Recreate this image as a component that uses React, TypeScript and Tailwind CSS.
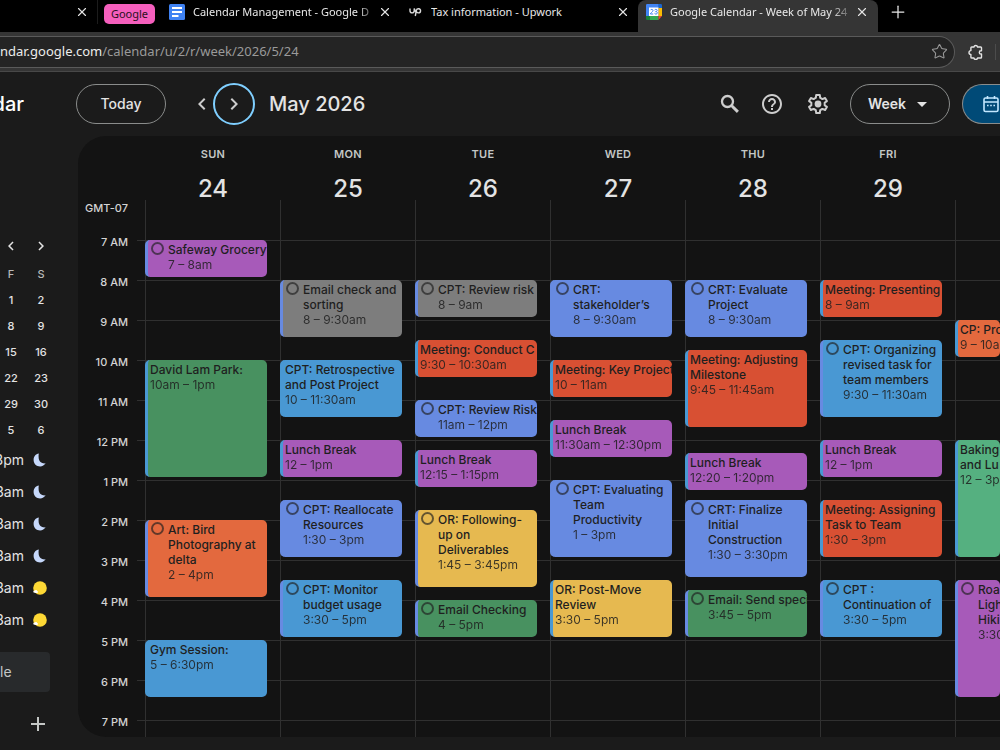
import React from 'react';
import { MdAdd, MdArrowDropDown, MdChevronLeft, MdChevronRight, MdHelpOutline } from 'react-icons/md';
import { LuPlus, LuStar, LuX } from 'react-icons/lu';

type Tone = 'purple' | 'green' | 'gray' | 'blue' | 'sky' | 'red' | 'orange' | 'yellow' | 'sage';

type CalEvent = {
  title: string;
  time: string;
  start: number;
  end: number;
  tone: Tone;
  edge: 'blue' | 'sky';
  task?: boolean;
};

const TONES: Record<Tone, string> = {
  purple: 'bg-[#a75ab9]',
  green: 'bg-[#489160]',
  gray: 'bg-[#7d7d7d]',
  blue: 'bg-[#678ae1]',
  sky: 'bg-[#4998d3]',
  red: 'bg-[#d85033]',
  orange: 'bg-[#e3693e]',
  yellow: 'bg-[#e6b950]',
  sage: 'bg-[#55b080]',
};

const EDGES = { blue: 'border-[#678ae1]', sky: 'border-[#4998d3]' };

const FIRST_MINUTE = 6 * 60;
const at = (hour: number, minute = 0) => hour * 60 + minute;

const DAYS: { name: string; date: string; events: CalEvent[] }[] = [
  {
    name: 'SUN',
    date: '24',
    events: [
      { title: 'Safeway Grocery', time: '7 – 8am', start: at(7), end: at(8), tone: 'purple', edge: 'blue', task: true },
      { title: 'David Lam Park:', time: '10am – 1pm', start: at(10), end: at(13), tone: 'green', edge: 'sky' },
      { title: 'Art: Bird\nPhotography at\ndelta', time: '2 – 4pm', start: at(14), end: at(16), tone: 'orange', edge: 'blue', task: true },
      { title: 'Gym Session:', time: '5 – 6:30pm', start: at(17), end: at(18, 30), tone: 'sky', edge: 'sky' },
    ],
  },
  {
    name: 'MON',
    date: '25',
    events: [
      { title: 'Email check and\nsorting', time: '8 – 9:30am', start: at(8), end: at(9, 30), tone: 'gray', edge: 'blue', task: true },
      { title: 'CPT: Retrospective\nand Post Project', time: '10 – 11:30am', start: at(10), end: at(11, 30), tone: 'sky', edge: 'sky' },
      { title: 'Lunch Break', time: '12 – 1pm', start: at(12), end: at(13), tone: 'purple', edge: 'sky' },
      { title: 'CPT: Reallocate\nResources', time: '1:30 – 3pm', start: at(13, 30), end: at(15), tone: 'blue', edge: 'blue', task: true },
      { title: 'CPT: Monitor\nbudget usage', time: '3:30 – 5pm', start: at(15, 30), end: at(17), tone: 'sky', edge: 'blue', task: true },
    ],
  },
  {
    name: 'TUE',
    date: '26',
    events: [
      { title: 'CPT: Review risk', time: '8 – 9am', start: at(8), end: at(9), tone: 'gray', edge: 'blue', task: true },
      { title: 'Meeting: Conduct C', time: '9:30 – 10:30am', start: at(9, 30), end: at(10, 30), tone: 'red', edge: 'sky' },
      { title: 'CPT: Review Risk', time: '11am – 12pm', start: at(11), end: at(12), tone: 'blue', edge: 'blue', task: true },
      { title: 'Lunch Break', time: '12:15 – 1:15pm', start: at(12, 15), end: at(13, 15), tone: 'purple', edge: 'sky' },
      { title: 'OR: Following-\nup on\nDeliverables', time: '1:45 – 3:45pm', start: at(13, 45), end: at(15, 45), tone: 'yellow', edge: 'blue', task: true },
      { title: 'Email Checking', time: '4 – 5pm', start: at(16), end: at(17), tone: 'green', edge: 'blue', task: true },
    ],
  },
  {
    name: 'WED',
    date: '27',
    events: [
      { title: 'CRT:\nstakeholder’s', time: '8 – 9:30am', start: at(8), end: at(9, 30), tone: 'blue', edge: 'blue', task: true },
      { title: 'Meeting: Key Project', time: '10 – 11am', start: at(10), end: at(11), tone: 'red', edge: 'sky' },
      { title: 'Lunch Break', time: '11:30am – 12:30pm', start: at(11, 30), end: at(12, 30), tone: 'purple', edge: 'sky' },
      { title: 'CPT: Evaluating\nTeam\nProductivity', time: '1 – 3pm', start: at(13), end: at(15), tone: 'blue', edge: 'blue', task: true },
      { title: 'OR: Post-Move\nReview', time: '3:30 – 5pm', start: at(15, 30), end: at(17), tone: 'yellow', edge: 'sky' },
    ],
  },
  {
    name: 'THU',
    date: '28',
    events: [
      { title: 'CRT: Evaluate\nProject', time: '8 – 9:30am', start: at(8), end: at(9, 30), tone: 'blue', edge: 'blue', task: true },
      { title: 'Meeting: Adjusting\nMilestone', time: '9:45 – 11:45am', start: at(9, 45), end: at(11, 45), tone: 'red', edge: 'sky' },
      { title: 'Lunch Break', time: '12:20 – 1:20pm', start: at(12, 20), end: at(13, 20), tone: 'purple', edge: 'sky' },
      { title: 'CRT: Finalize\nInitial\nConstruction', time: '1:30 – 3:30pm', start: at(13, 30), end: at(15, 30), tone: 'blue', edge: 'blue', task: true },
      { title: 'Email: Send speci', time: '3:45 – 5pm', start: at(15, 45), end: at(17), tone: 'green', edge: 'blue', task: true },
    ],
  },
  {
    name: 'FRI',
    date: '29',
    events: [
      { title: 'Meeting: Presenting', time: '8 – 9am', start: at(8), end: at(9), tone: 'red', edge: 'sky' },
      { title: 'CPT: Organizing\nrevised task for\nteam members', time: '9:30 – 11:30am', start: at(9, 30), end: at(11, 30), tone: 'sky', edge: 'blue', task: true },
      { title: 'Lunch Break', time: '12 – 1pm', start: at(12), end: at(13), tone: 'purple', edge: 'sky' },
      { title: 'Meeting: Assigning\nTask to Team', time: '1:30 – 3pm', start: at(13, 30), end: at(15), tone: 'red', edge: 'sky' },
      { title: 'CPT :\nContinuation of', time: '3:30 – 5pm', start: at(15, 30), end: at(17), tone: 'sky', edge: 'blue', task: true },
    ],
  },
  {
    name: '',
    date: '',
    events: [
      { title: 'CP: Pro', time: '9 – 10a', start: at(9), end: at(10), tone: 'orange', edge: 'sky' },
      { title: 'Baking\nand Lu', time: '12 – 3p', start: at(12), end: at(15), tone: 'sage', edge: 'sky' },
      { title: 'Roa\nLigh\nHiki', time: '3:30', start: at(15, 30), end: at(18, 30), tone: 'purple', edge: 'blue', task: true },
    ],
  },
];

const HOURS = ['7 AM', '8 AM', '9 AM', '10 AM', '11 AM', '12 PM', '1 PM', '2 PM', '3 PM', '4 PM', '5 PM', '6 PM', '7 PM'];

const WEEK_COLUMNS = 'grid grid-cols-[repeat(6,minmax(0,3fr))_minmax(0,1fr)]';

const MINI_DAYS = ['1', '2', '8', '9', '15', '16', '22', '23', '29', '30', '5', '6'];

const CLOCKS = [
  { time: '3pm', night: true },
  { time: '3am', night: true },
  { time: '3am', night: true },
  { time: '3am', night: true },
  { time: '3am', night: false },
  { time: '3am', night: false },
];

function DocsIcon() {
  return (
    <svg viewBox="0 0 16 16" className="size-4 shrink-0" aria-hidden="true">
      <rect width="16" height="16" rx="1.5" fill="#3f82f3" />
      <path d="M3 4h10M3 8h10M3 12h6.500" stroke="#fff" strokeWidth="1.800" />
    </svg>
  );
}

function UpworkIcon() {
  return (
    <svg viewBox="0 0 13 10" className="h-[10px] w-[13px] shrink-0" fill="none" stroke="#d8d8d8" strokeWidth="1.400" aria-hidden="true">
      <path d="M1 1.500v2.300a2.100 2.100 0 0 0 4.200 0V1.500c.6 1.800 1.600 3.400 2.900 4.100" />
      <path d="M6.300 9 7.400 3.400a2.100 2.100 0 1 1 2.100 2.500C8.600 5.900 8 5.500 7.300 4.700" />
    </svg>
  );
}

function CalendarLogo() {
  return (
    <svg viewBox="0 0 16 16" className="size-4 shrink-0" aria-hidden="true">
      <path d="M1.200 0h11.600v4H4v8H0V1.200A1.200 1.200 0 0 1 1.200 0Z" fill="#4285f4" />
      <path d="M12.500 0h2.300A1.200 1.200 0 0 1 16 1.200V4h-3.500Z" fill="#1967d2" />
      <path d="M12.500 4H16v8h-3.500Z" fill="#fbbc04" />
      <path d="M4 12h8.500v4H4Z" fill="#34a853" />
      <path d="M0 12h4v4H1.200A1.200 1.200 0 0 1 0 14.800Z" fill="#188038" />
      <path d="M12.500 12H16l-3.500 4Z" fill="#ea4335" />
      <path d="M3 3.500h9.500V12H3Z" fill="#fff" />
      <path d="M4.400 6.200c.4-1.100 2.600-1.100 2.600.3 0 1.500-2.500 2-2.600 3.500H7.200M8.600 6c.5-.9 2.600-.9 2.600.4 0 .9-.8 1.200-1.600 1.200.9 0 1.800.4 1.800 1.300 0 1.400-2.500 1.500-2.900.4" fill="none" stroke="#4285f4" />
    </svg>
  );
}

function PuzzleIcon() {
  return (
    <svg viewBox="0 0 16 16" className="size-4" fill="none" stroke="#e3e3e3" strokeWidth="1.400" strokeLinejoin="round" aria-hidden="true">
      <path d="M3.700 3h2.200a1.900 1.900 0 0 1 3.700 0h3.100c.5 0 .8.300.8.800v3h-.6a1.600 1.600 0 0 0 0 3.200h.6v3.200c0 .5-.3.800-.8.800H9.600a1.900 1.900 0 0 1-3.700 0H3.700c-.5 0-.8-.3-.8-.8v-2.800a1.900 1.900 0 0 1 0-3.800V3.800c0-.5.3-.8.800-.8Z" />
    </svg>
  );
}

function SearchIcon() {
  return (
    <svg viewBox="0 0 24 24" className="size-6" fill="none" stroke="currentColor" aria-hidden="true">
      <circle cx="9.500" cy="9.500" r="5.500" strokeWidth="2.300" />
      <path d="m13.700 13.700 6.200 6.200" strokeWidth="2.900" />
    </svg>
  );
}

function GearIcon() {
  return (
    <svg viewBox="0 0 24 24" className="size-6" fill="none" stroke="currentColor" strokeWidth="2" strokeLinejoin="round" aria-hidden="true">
      <path d="M10.200 3h3.600l.4 2.900c.8.300 1.500.7 2.200 1.200l2.700-1.100 1.800 3.100-2.300 1.700c.1.400.1.800.1 1.200s0 .8-.1 1.200l2.300 1.700-1.800 3.100-2.700-1.100c-.7.500-1.400.9-2.200 1.200l-.4 2.900h-3.600l-.4-2.900c-.8-.3-1.500-.7-2.200-1.200l-2.700 1.100-1.800-3.100 2.300-1.700c-.1-.4-.1-.8-.1-1.200s0-.8.1-1.200L3.100 9.100l1.800-3.100 2.700 1.100c.7-.5 1.400-.9 2.200-1.200Z" />
      <circle cx="12" cy="12" r="3.400" fill="currentColor" stroke="none" />
    </svg>
  );
}

function MonthIcon() {
  return (
    <svg viewBox="0 0 18 18" className="size-[18px] shrink-0" fill="none" stroke="#c2e7ff" strokeWidth="1.600" aria-hidden="true">
      <rect x="2" y="3" width="14" height="13.500" rx="1.500" />
      <path d="M2 7h14M5.500 1v3M12.500 1v3" />
      <path d="M5 10.500h1.600M8.200 10.500h1.600M11.400 10.500H13" />
    </svg>
  );
}

function Moon() {
  return (
    <svg viewBox="0 0 14 14" className="size-[14px] shrink-0" aria-hidden="true">
      <path d="M5.800.6C2.800 1 .600 3.600.600 6.900c0 3.700 2.900 6.500 6.500 6.500 2.300 0 4.300-1.200 5.500-3.100C9 11 6 8.500 5.700 5.200 5.500 3.400 5.500 2 5.800.6Z" fill="#c6d8fb" />
    </svg>
  );
}

function Sun() {
  return (
    <svg viewBox="0 0 14 14" className="size-[14px] shrink-0" aria-hidden="true">
      <circle cx="7" cy="7" r="6.800" fill="#fdd835" />
      <path d="M.300 11.300c-.2-1 .6-1.800 1.500-1.700.5-1.100 2.300-.7 2.400.5.8.2 1 1.100.500 1.600-1.300.4-3.200.3-4.400-.4Z" fill="#fff" />
    </svg>
  );
}

function TabClose({ label }: { label: string }) {
  return (
    <button type="button" aria-label={label} className="flex size-4 shrink-0 items-center justify-center text-[#e3e3e3]">
      <LuX className="size-[14px]" strokeWidth={2} />
    </button>
  );
}

function BrowserChrome() {
  return (
    <div className="font-['Noto_Sans',sans-serif]">
      <div className="flex h-8 items-stretch overflow-hidden bg-black pb-2 pl-[74px] text-[11px] text-[#e8e8e8]">
        <div className="flex shrink-0 items-center pr-[7px]">
          <TabClose label="Close tab" />
        </div>
        <div className="flex shrink-0 items-center border-l border-[#1c1c1c] pl-[6px]">
          <button type="button" className="mt-1 h-5 w-[51px] rounded-[5px] bg-[#f55fbd] text-center leading-5 text-[#2a1020]">
            Google
          </button>
        </div>
        <div className="flex w-[238px] shrink-0 items-center pl-[14px]">
          <DocsIcon />
          <span className="ml-2 flex-1 overflow-hidden whitespace-nowrap [mask-image:linear-gradient(to_right,black_90%,transparent)]">
            Calendar Management - Google D
          </span>
          <TabClose label="Close Calendar Management" />
        </div>
        <div className="ml-4 flex w-[222px] shrink-0 items-center">
          <UpworkIcon />
          <span className="ml-[9px] flex-1 overflow-hidden whitespace-nowrap">Tax information - Upwork</span>
          <TabClose label="Close Tax information" />
        </div>
        <div className="-mb-2 ml-[7px] flex w-[240px] shrink-0 items-center rounded-t-lg bg-[#353535] pr-2 pb-2 pl-2">
          <CalendarLogo />
          <span className="ml-2 flex-1 overflow-hidden whitespace-nowrap [mask-image:linear-gradient(to_right,black_88%,transparent)]">
            Google Calendar - Week of May 24
          </span>
          <TabClose label="Close Google Calendar" />
        </div>
        <button type="button" aria-label="New tab" className="ml-3 flex w-4 shrink-0 items-center justify-center">
          <LuPlus className="size-5 shrink-0" strokeWidth={1.5} />
        </button>
      </div>
      <div className="flex h-10 items-center border-b border-[#484848] bg-[#353535]">
        <div className="flex h-8 min-w-0 flex-1 items-center rounded-r-full border border-l-0 border-[#5a5a5a] bg-[#242424] pr-[6px] text-[13px] whitespace-nowrap">
          <p className="flex-1 overflow-hidden text-[#9a9a9a]">
            <span className="text-[#ececec]">ndar.google.com</span>/calendar/u/2/r/week/2026/5/24
          </p>
          <button type="button" aria-label="Bookmark this page" className="text-[#9a9a9a]">
            <LuStar className="size-[17px]" strokeWidth={1.5} />
          </button>
        </div>
        <button type="button" aria-label="Extensions" className="ml-[13px]">
          <PuzzleIcon />
        </button>
        <span className="ml-[11px] h-4 w-[5px] border-l border-[#4c4c4c]" />
      </div>
    </div>
  );
}

function TopBar() {
  return (
    <header className="flex h-16 items-center overflow-hidden text-[#e3e3e3]">
      <div className="flex w-[76px] shrink-0">
        <span className="flex w-6 justify-end text-xl leading-7 font-medium whitespace-nowrap text-white">dar</span>
      </div>
      <button type="button" className="h-10 w-[90px] shrink-0 rounded-full border border-[#8a8c8b] text-sm font-medium">
        Today
      </button>
      <button type="button" aria-label="Previous week" className="ml-[26px] flex w-5 shrink-0 justify-center text-[#cdcdcd]">
        <MdChevronLeft className="size-6 shrink-0" />
      </button>
      <button
        type="button"
        aria-label="Next week"
        className="ml-px flex size-[42px] shrink-0 items-center justify-center rounded-full border-2 border-[#7fcfff] text-[#cdcdcd]"
      >
        <MdChevronRight className="size-6" />
      </button>
      <h1 className="ml-[14px] text-xl leading-7 font-medium whitespace-nowrap">May 2026</h1>
      <div className="ml-auto flex shrink-0 items-center text-[#cdcdcd]">
        <button type="button" aria-label="Search">
          <SearchIcon />
        </button>
        <button type="button" aria-label="Support" className="ml-[18px]">
          <MdHelpOutline className="size-6" />
        </button>
        <button type="button" aria-label="Settings menu" className="ml-[22px]">
          <GearIcon />
        </button>
        <button
          type="button"
          className="ml-5 flex h-10 w-[100px] items-center justify-center rounded-full border border-[#8a8c8b] pl-[2px] text-sm font-semibold text-[#e3e3e3]"
        >
          Week
          <MdArrowDropDown className="ml-1 size-6" />
        </button>
        <button
          type="button"
          aria-label="Calendar view"
          className="ml-3 flex h-10 w-[38px] items-center overflow-hidden rounded-l-full border border-r-0 border-[#8a8c8b] bg-[#004a77] pl-[19px]"
        >
          <MonthIcon />
        </button>
      </div>
    </header>
  );
}

function Sidebar() {
  return (
    <aside className="flex w-[78px] shrink-0 flex-col items-end overflow-hidden pt-[98px] pr-[22px] text-[#e3e3e3]">
      <div className="grid shrink-0 grid-cols-[30px_30px] text-center text-[11px] font-medium">
        <button type="button" aria-label="Previous month" className="flex h-6 items-center justify-center">
          <MdChevronLeft className="size-[18px]" />
        </button>
        <button type="button" aria-label="Next month" className="flex h-6 items-center justify-center">
          <MdChevronRight className="size-[18px]" />
        </button>
        <span className="mt-[3px] h-[26px] leading-[26px] text-[#b8b8b8]">F</span>
        <span className="mt-[3px] h-[26px] leading-[26px] text-[#b8b8b8]">S</span>
        {MINI_DAYS.map((day) => (
          <button key={day} type="button" className="h-[26px]">
            {day}
          </button>
        ))}
      </div>
      <ul className="mt-px flex w-full flex-col items-end text-sm">
        {CLOCKS.map((clock, i) => (
          <li key={i} className="flex h-8 items-center gap-[9px] pr-[9px]">
            <span>{clock.time}</span>
            {clock.night ? <Moon /> : <Sun />}
          </li>
        ))}
      </ul>
      <div className="mt-4 flex w-full justify-end pr-[6px]">
        <button type="button" className="h-10 w-[50px] rounded-r-[4px] bg-[#282a2c] pr-[39px] text-right text-sm text-[#c4c7c5]">
          le
        </button>
      </div>
      <button type="button" aria-label="Add other calendars" className="mt-5 mr-[6px] text-[#c4c7c5]">
        <MdAdd className="size-6" />
      </button>
    </aside>
  );
}

function EventCard({ event }: { event: CalEvent }) {
  const step = 5;
  const rows = {
    gridRow: `${(event.start - FIRST_MINUTE) / step + 1} / ${(event.end - FIRST_MINUTE) / step + 1}`,
  };
  return (
    <button
      type="button"
      style={rows}
      className={`mb-[3px] -ml-px flex min-h-0 items-start overflow-hidden rounded-[5px] border-l-[3px] pt-[2px] pl-[2px] text-left text-xs leading-[15px] whitespace-pre text-[#1f1f1f] ${TONES[event.tone]} ${EDGES[event.edge]}`}
    >
      {event.task && <span className="mr-1 ml-px size-[13px] shrink-0 rounded-full border-2 border-[#1f1f1f]/65" />}
      <span className="shrink-0">
        <span className="block font-medium">{event.title}</span>
        <span className="block opacity-85">{event.time}</span>
      </span>
    </button>
  );
}

function WeekView() {
  return (
    <main className="flex min-w-0 flex-1 flex-col overflow-hidden rounded-l-[28px] bg-[#131313]">
      <div className="flex h-16 shrink-0 pl-[67px]">
        <div className={`flex-1 ${WEEK_COLUMNS}`}>
          {DAYS.map((day) => (
            <div key={day.name} className="flex flex-col items-center pl-px">
              <span className="mt-[10px] text-[11px] leading-4 font-semibold tracking-wide text-[#c4c7c5]">{day.name}</span>
              <span className="mt-[9px] text-2xl leading-9 font-medium text-[#e3e3e3]">{day.date}</span>
            </div>
          ))}
        </div>
      </div>
      <div className="flex h-[537px] shrink-0 overflow-hidden">
        <div className="flex w-[59px] shrink-0 flex-col pr-[9px] text-right text-[11px] leading-4 font-medium text-[#d4d4d4]">
          <span className="h-[34px] shrink-0">GMT-07</span>
          {HOURS.map((hour) => (
            <span key={hour} className="h-10 shrink-0">
              {hour}
            </span>
          ))}
        </div>
        <div className="grid min-w-0 flex-1 [grid-template-areas:'stack']">
          <div className="flex flex-col pt-10 [grid-area:stack]">
            {HOURS.map((hour) => (
              <div key={hour} className="h-10 shrink-0 border-t border-[#303030]" />
            ))}
          </div>
          <div className={`ml-2 [grid-area:stack] ${WEEK_COLUMNS}`}>
            {DAYS.map((day) => (
              <div
                key={day.name}
                className="grid h-[560px] grid-cols-[minmax(0,1fr)] grid-rows-[repeat(168,minmax(0,1fr))] border-l border-[#303030] [&:not(:last-child)]:pr-[13px]"
              >
                {day.events.map((event) => (
                  <EventCard key={event.start} event={event} />
                ))}
              </div>
            ))}
          </div>
        </div>
      </div>
    </main>
  );
}

export default function App() {
  return (
    <div className="flex min-h-screen flex-col overflow-hidden bg-[#1b1b1b] font-[Inter,sans-serif]">
      <BrowserChrome />
      <TopBar />
      <div className="flex">
        <Sidebar />
        <WeekView />
      </div>
    </div>
  );
}
